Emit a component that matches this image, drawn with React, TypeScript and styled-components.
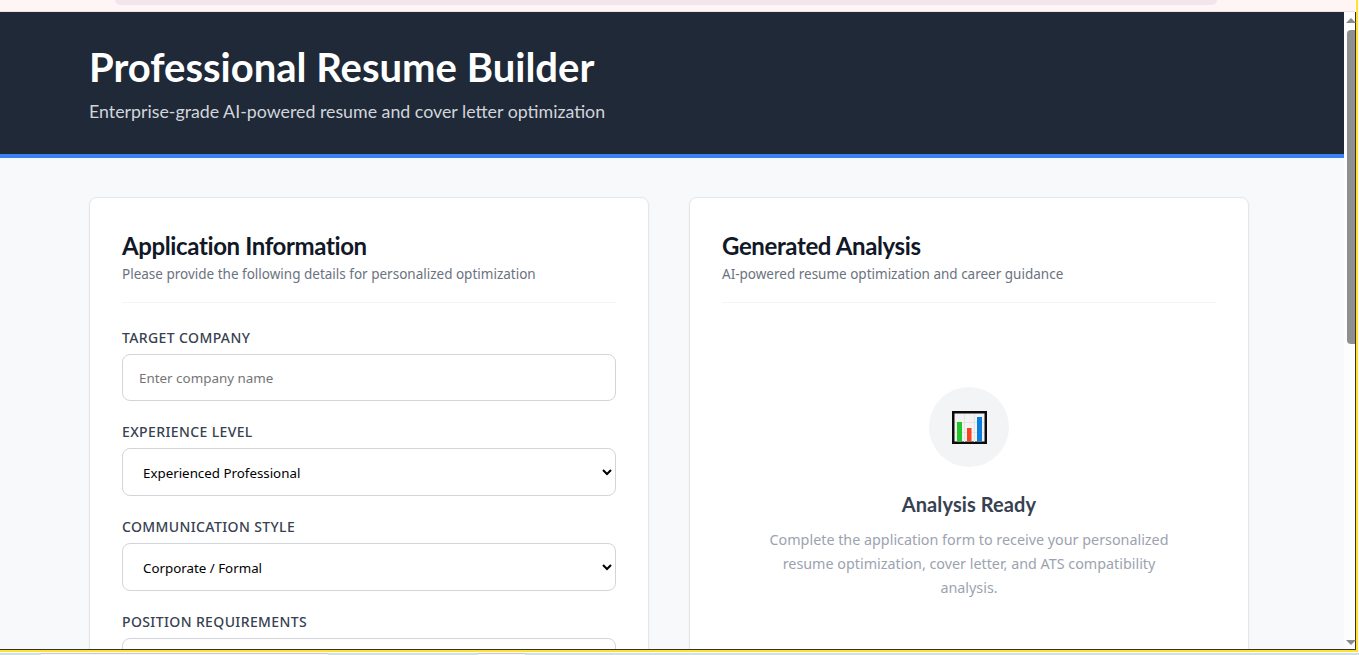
import styled, { createGlobalStyle } from "styled-components";

const GlobalStyle = createGlobalStyle`
  html, body {
    margin: 0;
    height: 100%;
    overflow: hidden;
    background: #fafafa;
  }
  * {
    box-sizing: border-box;
  }
`;

const headingFont = `"Lato", "Noto Sans", sans-serif`;

const Screen = styled.div`
  width: 1359px;
  height: 655px;
  display: flex;
  flex-direction: column;
  overflow: hidden;
  font-family: "Noto Sans", sans-serif;
`;

const Win = styled.div`
  width: 1358px;
  height: 652px;
  flex-shrink: 0;
  display: flex;
  flex-direction: column;
  border-right: 2px solid #ffe135;
  border-bottom: 2px solid #ffe135;
  background: #fff;
  overflow: hidden;
`;

const TopStrip = styled.div`
  height: 12px;
  flex-shrink: 0;
  margin-right: 1px;
  padding: 0 138px 0 115px;
  background: #fff5f5;
  border-bottom: 1px solid #f3dede;
`;

const TopPill = styled.div`
  height: 5px;
  background: #f3e5ec;
  border-radius: 0 0 14px 14px;
`;

const Viewport = styled.div`
  flex: 1;
  min-height: 0;
  display: flex;
  border-right: 1px solid #333;
  border-bottom: 1px solid #333;
`;

const Page = styled.div`
  flex: 1;
  min-width: 0;
  background: #f8f9fb;
  overflow: hidden;
`;

const Header = styled.header`
  height: 146px;
  padding: 31px 89px 0;
  background: #1f2937;
  border-bottom: 4px solid #3b82f6;
`;

const Title = styled.h1`
  margin: 0;
  color: #fff;
  font-family: ${headingFont};
  font-size: 40px;
  font-weight: 700;
  line-height: 48px;
`;

const Subtitle = styled.p`
  margin: 8px 0 0;
  color: #d1d5db;
  font-family: ${headingFont};
  font-size: 17.8px;
  line-height: 24px;
`;

const Columns = styled.main`
  display: grid;
  grid-template-columns: 560px 560px;
  gap: 40px;
  padding: 39px 89px 0;
`;

const Card = styled.section`
  height: 600px;
  padding: 32px;
  background: #fff;
  border: 1px solid #e5e7eb;
  border-radius: 8px;
  box-shadow: 0 1px 3px rgba(0, 0, 0, 0.05);
`;

const CardHead = styled.div`
  height: 73px;
  margin-bottom: 25px;
  border-bottom: 1px solid #f3f4f6;
`;

const CardTitle = styled.h2`
  margin: 0;
  color: #111827;
  font-family: ${headingFont};
  font-size: 24px;
  font-weight: 700;
  line-height: 32px;
  letter-spacing: -0.38px;
`;

const CardSub = styled.p`
  margin: 2px 0 0;
  color: #6b7280;
  font-size: 13.5px;
  line-height: 20px;
`;

const Field = styled.div`
  margin-bottom: 21px;
`;

const Label = styled.label`
  display: block;
  margin-bottom: 6px;
  color: #374151;
  font-size: 14px;
  font-weight: 500;
  line-height: 20px;
  letter-spacing: 0.38px;
  text-transform: uppercase;
`;

const TextInput = styled.input`
  display: block;
  width: 100%;
  height: 47px;
  padding: 0 16px;
  background: #fff;
  border: 1px solid #d1d5db;
  border-radius: 8px;
  font-family: inherit;
  font-size: 13.4px;
  &::placeholder {
    color: #757575;
    opacity: 1;
  }
`;

const Select = styled.select`
  display: block;
  width: 100%;
  height: 48px;
  padding: 2px 16px 0;
  background: #fff;
  color: #000;
  border: 1px solid #d1d5db;
  border-radius: 8px;
  font-family: inherit;
  font-size: 13.33px;
`;

const TextArea = styled.textarea`
  display: block;
  width: 100%;
  height: 120px;
  background: #fff;
  border: 1px solid #d1d5db;
  border-radius: 8px;
  resize: none;
`;

const Empty = styled.div`
  display: flex;
  flex-direction: column;
  align-items: center;
  padding: 59px 32px 0;
  text-align: center;
`;

const IconCircle = styled.div`
  width: 80px;
  height: 80px;
  display: flex;
  align-items: center;
  justify-content: center;
  background: #f3f4f6;
  border-radius: 50%;
`;

const EmptyTitle = styled.h3`
  margin: 23px 0 0;
  color: #374151;
  font-family: ${headingFont};
  font-size: 20px;
  font-weight: 700;
  line-height: 28px;
  letter-spacing: 0.1px;
`;

const EmptyText = styled.p`
  width: 420px;
  margin: 10px 0 0;
  color: #9ca3af;
  font-size: 14.33px;
  line-height: 24px;
`;

const ScrollTrack = styled.div`
  position: relative;
  width: 11px;
  flex-shrink: 0;
  background: #fdfdfd;
`;

const ScrollArrow = styled.div<{ $down?: boolean }>`
  position: absolute;
  left: 2px;
  width: 0;
  height: 0;
  border-left: 5px solid transparent;
  border-right: 5px solid transparent;
  ${(p) =>
    p.$down
      ? `bottom: 4px; border-top: 5px solid #8a8a8a;`
      : `top: 6px; border-bottom: 5px solid #8a8a8a;`}
`;

const ScrollThumb = styled.div`
  position: absolute;
  top: 18px;
  left: 3px;
  width: 8px;
  height: 314px;
  background: #8f8f8f;
  border-radius: 4px 0 0 4px;
`;

const BottomStrip = styled.div`
  flex: 1;
  display: flex;
  align-items: flex-end;
  background: #fafafa;
`;

const TaskSegment = styled.div<{ $width: number; $light?: boolean }>`
  height: 2px;
  flex: ${(p) => (p.$width ? `0 0 ${p.$width}px` : "1")};
  background: ${(p) => (p.$light ? "#f7f7f7" : "#cfe0e0")};
  border-top: ${(p) => (p.$light ? "1px solid #c8c8c8" : "none")};
`;

function ChartIcon() {
  return (
    <svg width="35" height="33" viewBox="0 0 35 33">
      <rect x="1.25" y="1.25" width="32.5" height="30.5" fill="#f3f3f3" stroke="#0c0c0c" strokeWidth="2.5" />
      <path d="M12.5 3v28M22.5 3v28M3 11.5h29M3 21.5h29" stroke="#e4e4e4" strokeWidth="1" />
      <rect x="5" y="11" width="5" height="19.5" fill="#1fc72a" />
      <rect x="15" y="17" width="4.5" height="13.5" fill="#f4451f" />
      <rect x="25" y="6" width="5" height="24.5" fill="#0a7fe0" />
    </svg>
  );
}

export default function App() {
  return (
    <Screen>
      <GlobalStyle />
      <Win>
        <TopStrip>
          <TopPill />
        </TopStrip>
        <Viewport>
          <Page>
            <Header>
              <Title>Professional Resume Builder</Title>
              <Subtitle>Enterprise-grade AI-powered resume and cover letter optimization</Subtitle>
            </Header>
            <Columns>
              <Card>
                <CardHead>
                  <CardTitle>Application Information</CardTitle>
                  <CardSub>Please provide the following details for personalized optimization</CardSub>
                </CardHead>
                <Field>
                  <Label>Target Company</Label>
                  <TextInput placeholder="Enter company name" />
                </Field>
                <Field>
                  <Label>Experience Level</Label>
                  <Select defaultValue="Experienced Professional">
                    <option>Experienced Professional</option>
                  </Select>
                </Field>
                <Field>
                  <Label>Communication Style</Label>
                  <Select defaultValue="Corporate / Formal">
                    <option>Corporate / Formal</option>
                  </Select>
                </Field>
                <Field>
                  <Label>Position Requirements</Label>
                  <TextArea />
                </Field>
              </Card>
              <Card>
                <CardHead>
                  <CardTitle>Generated Analysis</CardTitle>
                  <CardSub>AI-powered resume optimization and career guidance</CardSub>
                </CardHead>
                <Empty>
                  <IconCircle>
                    <ChartIcon />
                  </IconCircle>
                  <EmptyTitle>Analysis Ready</EmptyTitle>
                  <EmptyText>
                    Complete the application form to receive your personalized resume optimization, cover letter, and ATS compatibility analysis.
                  </EmptyText>
                </Empty>
              </Card>
            </Columns>
          </Page>
          <ScrollTrack>
            <ScrollArrow />
            <ScrollThumb />
            <ScrollArrow $down />
          </ScrollTrack>
        </Viewport>
      </Win>
      <BottomStrip>
        <TaskSegment $width={41} />
        <TaskSegment $width={287} $light />
        <TaskSegment $width={150} />
        <TaskSegment $width={47} $light />
        <TaskSegment $width={0} />
      </BottomStrip>
    </Screen>
  );
}
